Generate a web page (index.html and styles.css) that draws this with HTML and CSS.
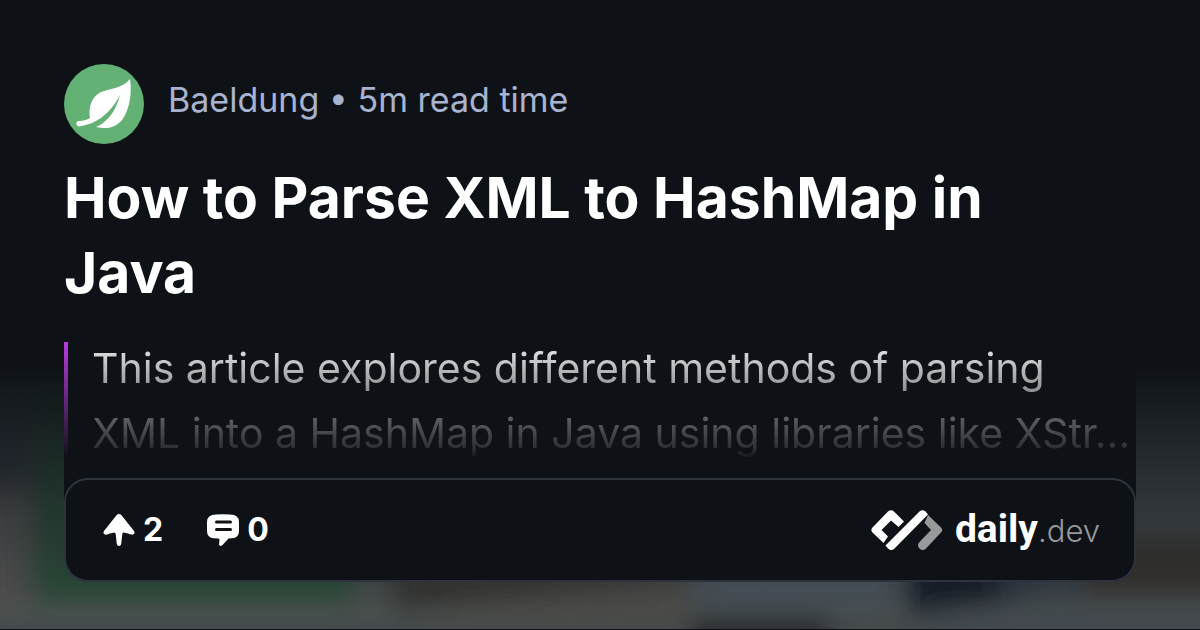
FILE: index.html
```html
<!DOCTYPE html>
<html lang="en">
<head>
<meta charset="utf-8">
<meta name="viewport" content="width=device-width, initial-scale=1">
<title>How to Parse XML to HashMap in Java</title>
<link rel="stylesheet" href="styles.css">
</head>
<body>
<svg class="backdrop" viewBox="0 0 1200 630" preserveAspectRatio="none" aria-hidden="true">
  <defs>
    <filter id="soft" x="-20%" y="-50%" width="140%" height="200%"><feGaussianBlur stdDeviation="13"/></filter>
    <linearGradient id="shade" x1="0" y1="0" x2="0" y2="1">
      <stop offset="0.58" stop-color="#0e1217"/>
      <stop offset="0.68" stop-color="#0e1217" stop-opacity="0.7"/>
      <stop offset="0.82" stop-color="#0e1217" stop-opacity="0.32"/>
      <stop offset="0.97" stop-color="#0e1217" stop-opacity="0"/>
    </linearGradient>
  </defs>
  <rect width="1200" height="630" fill="#454a4b"/>
  <g filter="url(#soft)">
    <rect x="-40" y="400" width="70" height="90" fill="#393b42"/>
    <rect x="-40" y="490" width="68" height="120" fill="#4f5050"/>
    <rect x="34" y="380" width="320" height="224" fill="#2c4937"/>
    <rect x="-40" y="608" width="430" height="14" fill="#4d524f"/>
    <rect x="-40" y="628" width="430" height="50" fill="#40454c"/>
    <path d="M390 570H690V580L395 608Z" fill="#33312e"/>
    <path d="M430 612L690 586V625H430Z" fill="#4b4c47"/>
    <rect x="695" y="550" width="205" height="58" fill="#465158"/>
    <rect x="690" y="620" width="140" height="50" fill="#25272b"/>
    <path d="M905 560H1040V595L910 615Z" fill="#181d25"/>
    <rect x="1000" y="570" width="80" height="24" fill="#303a44"/>
    <rect x="1090" y="380" width="150" height="150" fill="#43494b"/>
    <rect x="1080" y="538" width="160" height="56" fill="#35322d"/>
    <rect x="930" y="612" width="310" height="40" fill="#424a50"/>
  </g>
  <rect width="1200" height="630" fill="url(#shade)"/>
</svg>
<main class="post">
  <header class="source">
    <svg class="avatar" viewBox="0 0 80 80" role="img" aria-label="Baeldung">
      <circle cx="40" cy="40" r="40" fill="#63b175"/>
      <path d="M66 15C68 27 66 43 60 53C54 63 44 66 32 63C42 59 52 48 56 31C50 43 40 54 28 59C23 61 18 62 15 62.500C11.500 62 11.500 57 15 57C19 57 23 56 26 54C24 43 28 33 36 28.500C45 24.500 58 25 66 15Z" fill="#fff"/>
    </svg>
    <p class="meta">Baeldung • 5m read time</p>
  </header>
  <h1 class="title">How to Parse XML to HashMap in<br>Java</h1>
  <div class="summary">
    <p class="excerpt">This article explores different methods of parsing<br>XML into a HashMap in Java using libraries like XStr…</p>
  </div>
  <footer class="bar">
    <div class="stats">
      <span class="stat">
        <svg class="icon" viewBox="0 0 32 32" role="img" aria-label="Upvotes"><path d="M13.500 1.200Q16 -1 18.500 1.200L31 17Q32.500 19.500 30 20.500Q28 21 25 19.500L20.500 18.500Q19.500 18.500 19.300 20L18.200 30Q17.700 32 16 32Q14.300 32 13.800 30L12.700 20Q12.500 18.500 11.500 18.500L7 19.500Q4 21 2 20.500Q-.5 19.500 1 17Z"/></svg>
        2
      </span>
      <span class="stat">
        <svg class="icon" viewBox="0 0 32 32" role="img" aria-label="Comments"><path fill-rule="evenodd" d="M9 0.500Q16 -.2 23 .5Q32 .7 32 8V17Q32 24 25 24.300L21.500 24.600L15.500 31Q13 33 12 30.500L12.500 26Q12.600 24.500 11 24.500L7 24.200Q0 24 0 17V8Q0 .7 9 .5ZM9.500 6.500A1.500 1.500 0 0 0 9.500 9.500H23.500A1.500 1.500 0 0 0 23.500 6.500ZM9.500 14A1.500 1.500 0 0 0 9.500 17H23.500A1.500 1.500 0 0 0 23.500 14Z"/></svg>
        0
      </span>
    </div>
    <div class="brand">
      <svg class="mark" viewBox="0 0 72 40" aria-hidden="true">
        <path d="M57 5L70 17.500Q72.500 20 70 22.500L55 38.500Q51.500 41.500 48.500 38.500Q45.500 35 48.500 32L60 20L53.500 13Z" fill="#98999b"/>
        <path d="M33 11.500L27.500 17L20 10.500L10.500 20L17 26.500L12.500 33L1.500 22.500Q-.8 20 1.500 17.500L17 1.500Q20 -1 23 1.500Z" fill="#fff"/>
        <path d="M48.500 1.500Q51.500 -1 54.500 1.500L57 4.500L23.500 38.500Q20.500 41.500 17 38.500L14.500 35.500Z" fill="#fff"/>
      </svg>
      <p class="wordmark"><span class="name">daily</span><span class="tld">.dev</span></p>
    </div>
  </footer>
</main>
</body>
</html>
```
FILE: styles.css
```css
* {
  box-sizing: border-box;
}

body {
  margin: 0;
  min-height: 100vh;
  background: #0e1217;
  color: #fff;
  font-family: Inter, "Open Sans", sans-serif;
  border-bottom: 1px solid #000;
}

p,
h1 {
  margin: 0;
}

.backdrop {
  position: absolute;
  inset: 0 0 1px;
  width: 100%;
  height: calc(100% - 1px);
  z-index: -1;
}

.post {
  padding: 64px 64px 48px;
}

.source {
  display: flex;
  align-items: center;
  gap: 24px;
}

.avatar {
  width: 80px;
  height: 80px;
}

.meta {
  color: #a8b3cf;
  font-size: 34px;
  line-height: 48px;
  padding-bottom: 8px;
}

.title {
  margin-top: 16px;
  font-size: 57px;
  font-weight: 700;
  line-height: 75px;
}

.summary {
  padding: 26px 0 36px 28px;
  background:
    linear-gradient(#b83be0, #0e1217) 0 32px / 4px 116px no-repeat,
    #0e1217;
}

.excerpt {
  color: transparent;
  background: linear-gradient(#e0e1e2 12px, #98999b 50px, #58595c 85px, #2c2f33 112px, #0e1217 124px) text;
  font-size: 41px;
  font-weight: 400;
  line-height: 65px;
  white-space: nowrap;
}

.bar {
  display: flex;
  align-items: center;
  justify-content: space-between;
  height: 104px;
  margin-top: -24px;
  padding: 0 34px 0 37px;
  border: 2px solid #2d323b;
  border-radius: 24px;
  background: #0e1217;
}

.stats {
  display: flex;
  gap: 44px;
}

.stat {
  display: flex;
  align-items: center;
  gap: 8px;
  font-size: 32px;
  font-weight: 700;
  line-height: 40px;
}

.icon {
  width: 32px;
  height: 32px;
  fill: #fff;
}

.brand {
  display: flex;
  align-items: center;
  gap: 12px;
}

.mark {
  width: 72px;
  height: 40px;
}

.wordmark {
  display: flex;
  align-items: baseline;
  line-height: 40px;
}

.name {
  font-family: Roboto, sans-serif;
  font-size: 39px;
  font-weight: 700;
}

.tld {
  color: #98999b;
  font-size: 31px;
  font-weight: 300;
}
```
